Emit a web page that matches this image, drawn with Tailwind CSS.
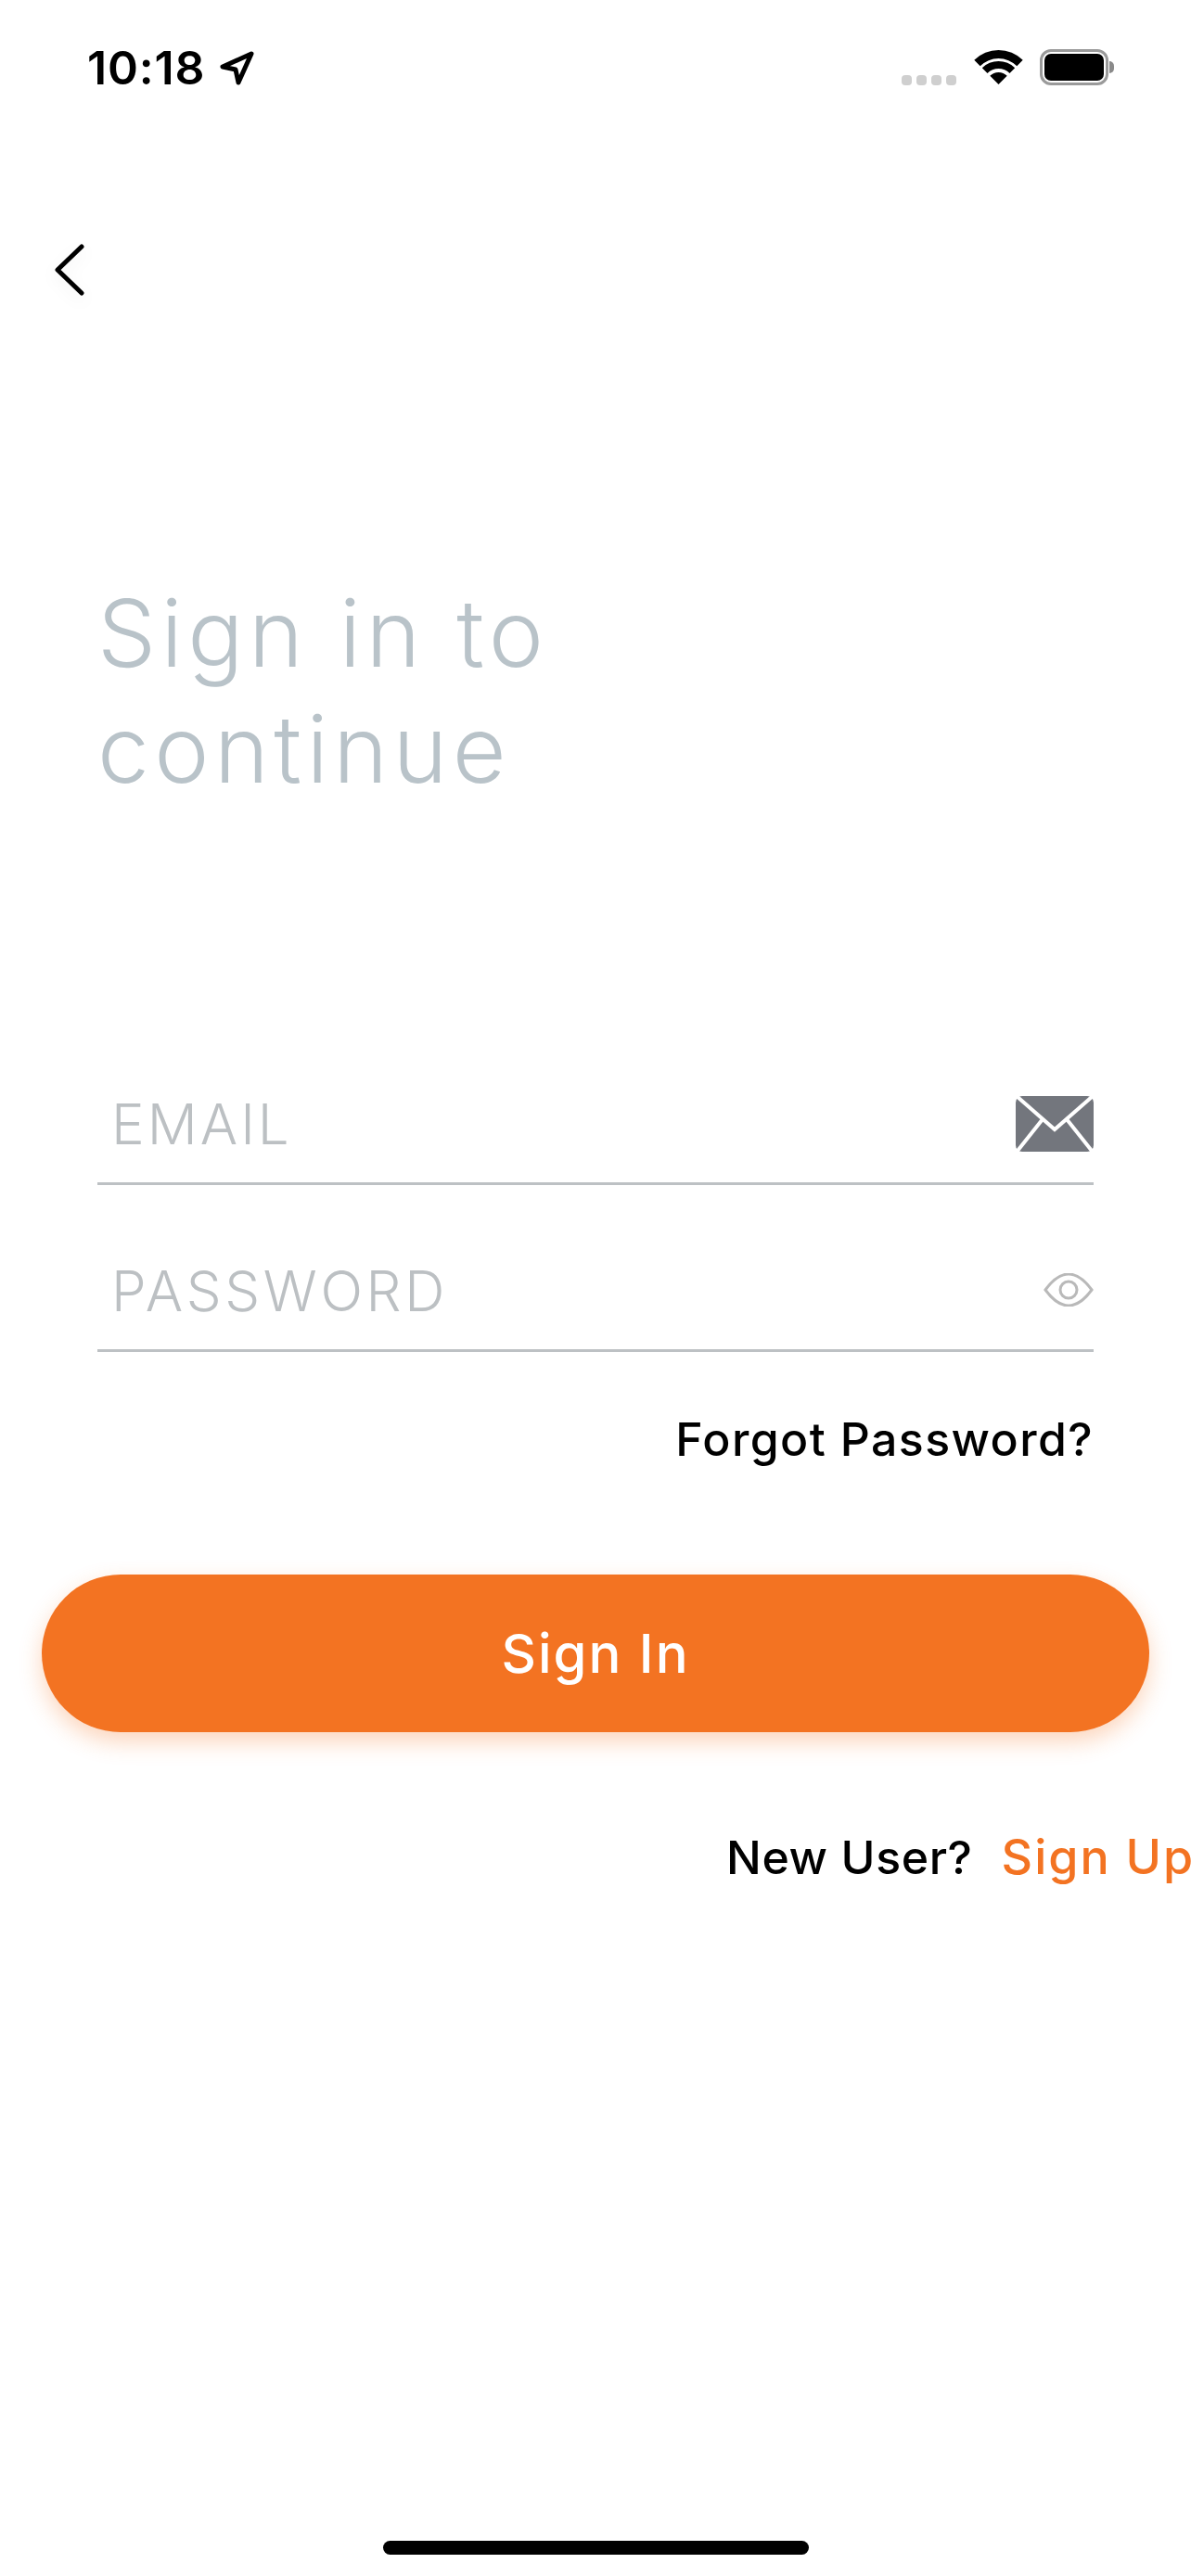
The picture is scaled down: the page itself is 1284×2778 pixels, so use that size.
<!DOCTYPE html>
<html lang="en">
<head>
  <meta charset="UTF-8" />
  <title>Sign in</title>
  <script src="https://cdn.jsdelivr.net/npm/@tailwindcss/browser@4"></script>
</head>
<body class="bg-white font-['Inter',sans-serif] overflow-hidden">
  <div class="relative w-[1284px] h-[2778px] overflow-hidden flex flex-col">
    <!-- status bar -->
    <div class="h-[146px] pt-[51px] pl-[94px] pr-[83px] flex justify-between items-start">
      <div class="flex items-center gap-[15px] h-[44px]">
        <span class="text-[50px] leading-[44px] font-semibold text-black tracking-[0.8px]">10:18</span>
        <svg class="w-[38px] h-[38px]" viewBox="0 0 38 38"><path d="M35 4 L4 18 L18 21 L21 35 Z" fill="none" stroke="#000" stroke-width="5" stroke-linejoin="round"/></svg>
      </div>
      <div class="flex items-start">
        <div class="flex gap-[5px] mt-[30px] mr-[20px]">
          <span class="w-[11px] h-[11px] rounded-[4px] bg-[#cfcfcf]"></span>
          <span class="w-[11px] h-[11px] rounded-[4px] bg-[#cfcfcf]"></span>
          <span class="w-[11px] h-[11px] rounded-[4px] bg-[#cfcfcf]"></span>
          <span class="w-[11px] h-[11px] rounded-[4px] bg-[#cfcfcf]"></span>
        </div>
        <svg class="w-[51px] h-[37px] mt-[3px] mr-[19px] overflow-visible" viewBox="0 0 51 37">
          <path d="M-0.7 10.8 A37 37 0 0 1 51.7 10.8 L45.3 17.2 A28 28 0 0 0 5.7 17.2 Z M7.8 19.3 A25 25 0 0 1 43.2 19.3 L37.5 25 A17 17 0 0 0 13.5 25 Z M16.3 27.8 A13 13 0 0 1 34.7 27.8 L25.5 37 Z" fill="#000"/>
        </svg>
        <div class="flex items-center mt-[2px]">
          <div class="w-[74px] h-[39px] rounded-[12px] border-[3.5px] border-[#9a9a9a] p-[2px]">
            <div class="w-full h-full rounded-[7px] bg-black"></div>
          </div>
          <div class="w-[5px] h-[13px] rounded-r-[5px] bg-[#8a8a8a] ml-[1px]"></div>
        </div>
      </div>
    </div>

    <div class="px-[105px]">
      <h1 class="mt-[474px] text-[100px] leading-[125px] font-[350] tracking-[5.4px] text-[#b9c3c9]">Sign in to<br />continue</h1>

      <div class="mt-[285px] h-[123px] flex items-center justify-between border-b-[3px] border-[#bdc1c4] pl-[15px] pb-[6px]">
        <span class="text-[60px] font-light tracking-[3px] text-[#bcc0c3] leading-none">EMAIL</span>
        <svg class="w-[84px] h-[60px]" viewBox="0 0 84 60">
          <rect width="84" height="60" rx="7" fill="#73767d"/>
          <path d="M2 1 L42 36 L82 1 M29 25 L2 59 M55 25 L82 59" fill="none" stroke="#fff" stroke-width="4"/>
        </svg>
      </div>
      <div class="mt-[57px] h-[123px] flex items-center justify-between border-b-[3px] border-[#bdc1c4] pl-[15px] pb-[6px]">
        <span class="text-[60px] font-light tracking-[3.6px] text-[#bcc0c3] leading-none">PASSWORD</span>
        <svg class="w-[54px] h-[36px] -mt-[2px]" viewBox="0 0 54 36">
          <path d="M2 18 Q27 -16 52 18 Q27 52 2 18 Z" fill="none" stroke="#b9b9b9" stroke-width="3"/>
          <circle cx="27" cy="18" r="9" fill="none" stroke="#b9b9b9" stroke-width="3"/>
        </svg>
      </div>
      <p class="mt-[64px] text-right text-[50px] leading-[60px] font-medium tracking-[1.4px] text-black">Forgot Password?</p>
    </div>

    <div class="mx-[45px] mt-[116px] h-[170px] rounded-full bg-[#f37322] shadow-[0_10px_24px_rgba(244,117,33,0.3)] flex items-center justify-center text-white text-[58px] font-medium tracking-[2px]">Sign In</div>

    <div class="mt-[105px] pl-[783px] flex gap-[31px] text-[50px] leading-[60px] font-medium whitespace-nowrap">
      <span class="text-black tracking-[0.6px]">New User?</span>
      <span class="text-[#f37322] text-[52px] tracking-[2px]">Sign Up</span>
    </div>

    <!-- back chevron sits over the empty header space -->
    <svg class="absolute left-[58px] top-[262px] w-[34px] h-[58px] drop-shadow-[0_6px_8px_rgba(0,0,0,0.06)]" viewBox="0 0 34 58"><path d="M30 4 L4 29 L30 54" fill="none" stroke="#000" stroke-width="5" stroke-linecap="round" stroke-linejoin="round"/></svg>
    <div class="absolute left-[413px] top-[2740px] w-[459px] h-[15px] rounded-full bg-black"></div>
  </div>
</body>
</html>
